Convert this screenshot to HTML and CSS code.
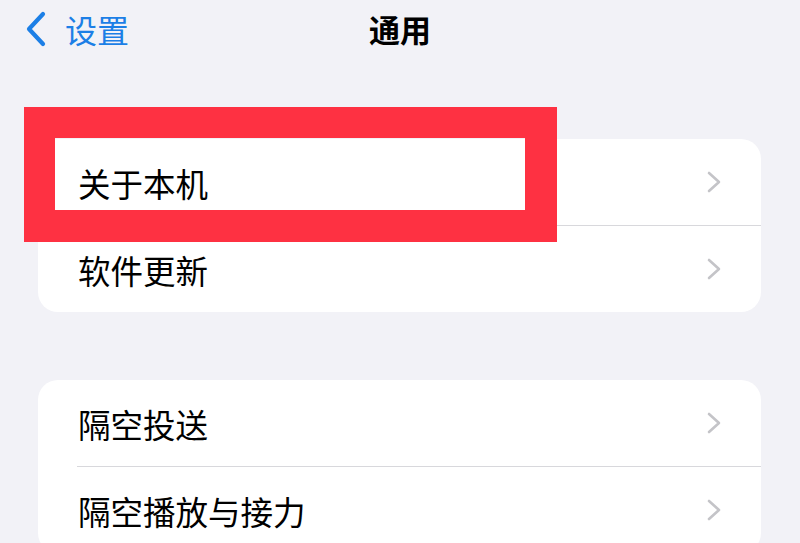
FILE: index.html
```html
<!DOCTYPE html>
<html lang="zh-CN">
<head>
<meta charset="utf-8">
<link rel="stylesheet" href="styles.css">
</head>
<body>
<div class="screen">
  <header class="nav">
    <div class="back">
      <svg class="back-chev" width="22" height="36" viewBox="0 0 22 36"><path d="M18 3 L4 18 L18 33" fill="none" stroke="#1c7fe6" stroke-width="4.2" stroke-linecap="round" stroke-linejoin="round"/></svg>
      <span class="back-label">设置</span>
    </div>
    <h1 class="title">通用</h1>
    <div class="spacer"></div>
  </header>
  <main class="content">
    <section class="card">
      <div class="row"><div class="row-inner"><span class="label">关于本机</span><svg class="chev" width="16" height="24" viewBox="0 0 16 24"><path d="M3 3 L13 12 L3 21" fill="none" stroke="#c4c4c8" stroke-width="2.6" stroke-linecap="round" stroke-linejoin="round"/></svg></div></div>
      <div class="row"><div class="row-inner sep"><span class="label">软件更新</span><svg class="chev" width="16" height="24" viewBox="0 0 16 24"><path d="M3 3 L13 12 L3 21" fill="none" stroke="#c4c4c8" stroke-width="2.6" stroke-linecap="round" stroke-linejoin="round"/></svg></div></div>
    </section>
    <section class="card">
      <div class="row"><div class="row-inner"><span class="label">隔空投送</span><svg class="chev" width="16" height="24" viewBox="0 0 16 24"><path d="M3 3 L13 12 L3 21" fill="none" stroke="#c4c4c8" stroke-width="2.6" stroke-linecap="round" stroke-linejoin="round"/></svg></div></div>
      <div class="row"><div class="row-inner sep"><span class="label">隔空播放与接力</span><svg class="chev" width="16" height="24" viewBox="0 0 16 24"><path d="M3 3 L13 12 L3 21" fill="none" stroke="#c4c4c8" stroke-width="2.6" stroke-linecap="round" stroke-linejoin="round"/></svg></div></div>
    </section>
  </main>
  <div class="highlight"></div>
</div>
</body>
</html>
```
FILE: styles.css
```css
html, body {
  margin: 0;
  padding: 0;
  background: #f2f2f7;
}
.screen {
  position: relative;
  width: 800px;
  height: 543px;
  overflow: hidden;
  font-family: "Noto Sans CJK SC", "Noto Sans", sans-serif;
  color: #000;
}
.nav {
  height: 60px;
  display: grid;
  grid-template-columns: 1fr auto 1fr;
  align-items: center;
}
.back {
  display: flex;
  align-items: center;
  padding-left: 25px;
  gap: 18px;
  margin-top: -3px;
}
.back-chev {
  display: block;
}
.back-label {
  color: #1c7fe6;
  font-size: 32px;
  line-height: 40px;
}
.title {
  margin: 0;
  margin-top: -3px;
  font-size: 31px;
  font-weight: 600;
  line-height: 40px;
}
.content {
  padding: 79px 39px 0 38px;
  display: flex;
  flex-direction: column;
  gap: 68px;
}
.card {
  background: #fff;
  border-radius: 20px;
  overflow: hidden;
}
.row {
  padding-left: 39px;
}
.row-inner {
  height: 86px;
  display: flex;
  align-items: center;
  justify-content: space-between;
  padding-right: 39px;
}
.row-inner.sep {
  border-top: 1px solid #d8d8dc;
}
.label {
  font-size: 32.5px;
  line-height: 40px;
  padding-left: 1px;
  margin-top: 2px;
}
.chev {
  display: block;
}
.highlight {
  position: absolute;
  left: 24px;
  top: 107px;
  width: 533px;
  height: 135px;
  box-sizing: border-box;
  border-style: solid;
  border-color: #fe3142;
  border-width: 31px 32px 32px 31px;
}
```
